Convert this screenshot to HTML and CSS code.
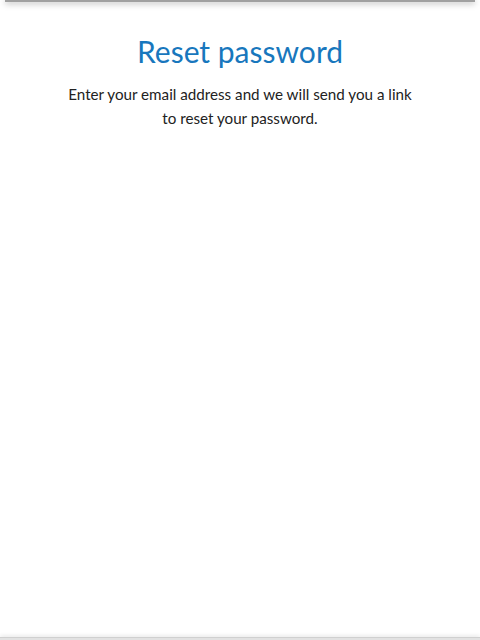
FILE: index.html
```html
<!DOCTYPE html>
<html lang="en">
<head>
<meta charset="utf-8">
<title>Reset password</title>
<link rel="stylesheet" href="styles.css">
</head>
<body>
<div class="topbar"></div>
<main class="content">
  <h1 class="title">Reset password</h1>
  <p class="lead">Enter your email address and we will send you a link<br>to reset your password.</p>
</main>
<div class="bottombar"></div>
</body>
</html>
```
FILE: styles.css
```css
html, body {
  margin: 0;
  padding: 0;
  height: 100%;
  background: #ffffff;
}
body {
  display: flex;
  flex-direction: column;
  font-family: Lato, "Noto Sans", sans-serif;
  overflow: hidden;
}
.topbar {
  height: 2px;
  margin: 0 5px;
  background: #a0a0a0;
  box-shadow: 0 1px 6px rgba(0, 0, 0, 0.5);
  flex: none;
}
.content {
  flex: 1;
  display: flex;
  flex-direction: column;
  align-items: center;
  text-align: center;
  padding-top: 29px;
}
.title {
  margin: 0;
  font-size: 30px;
  font-weight: 400;
  line-height: 40px;
  color: #1877bd;
}
.lead {
  margin: 11px 0 0;
  font-size: 15.2px;
  line-height: 24px;
  color: #222222;
}
.bottombar {
  height: 2px;
  flex: none;
  background: #e2e2e2;
  border-top: 1px solid #d0d0d0;
  box-shadow: 0 -1px 4px rgba(0, 0, 0, 0.12);
}
```
